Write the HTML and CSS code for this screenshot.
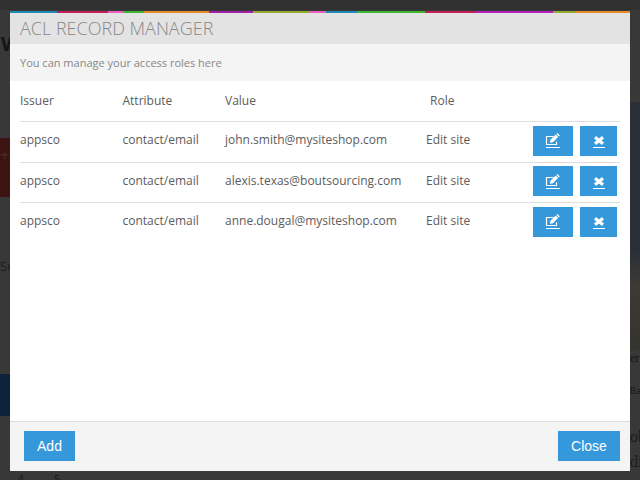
FILE: index.html
```html
<!DOCTYPE html>
<html lang="en">
<head>
<meta charset="utf-8">
<title>ACL Record Manager</title>
<link rel="stylesheet" href="styles.css">
</head>
<body>
<div class="backdrop">
  <span class="bg-w">W</span>
  <span class="bg-red">+</span>
  <span class="bg-su">Su</span>
  <span class="bg-navy"></span>
  <span class="bg-map"></span>
  <span class="bg-er">er</span>
  <span class="bg-ba">Ba</span>
  <span class="bg-ob">ob<br>di</span>
  <span class="bg-foot">4 5</span>
</div>
<div class="modal">
  <div class="stripe"></div>
  <h1 class="title">ACL RECORD MANAGER</h1>
  <p class="sub">You can manage your access roles here</p>
  <div class="content">
    <div class="row head">
      <span>Issuer</span><span>Attribute</span><span>Value</span><span class="role-head">Role</span>
    </div>
    <div class="row">
      <span>appsco</span><span>contact/email</span><span>john.smith@mysiteshop.com</span><span>Edit site</span>
      <div class="actions">
        <button class="icon-btn edit" aria-label="Edit"><svg viewBox="0 0 16 16" width="16" height="16"><path class="s" d="M11.5 8.5V11.5H1.5V3.5H8.5"/><path class="f" d="M4.8 9.8l.7-3 5.2-5.2 2.4 2.4-5.2 5.2zM11.4 1l1-1 2.4 2.4-1 1z"/><path class="s thin" d="M1 14.5H15"/></svg></button>
        <button class="icon-btn del" aria-label="Delete"><svg viewBox="0 0 12 16" width="12" height="16"><path class="x" d="M2 4.2L10 10.8M10 4.2L2 10.8"/><path class="s thin" d="M0 14.5H12"/></svg></button>
      </div>
    </div>
    <div class="row">
      <span>appsco</span><span>contact/email</span><span>alexis.texas@boutsourcing.com</span><span>Edit site</span>
      <div class="actions">
        <button class="icon-btn edit" aria-label="Edit"><svg viewBox="0 0 16 16" width="16" height="16"><path class="s" d="M11.5 8.5V11.5H1.5V3.5H8.5"/><path class="f" d="M4.8 9.8l.7-3 5.2-5.2 2.4 2.4-5.2 5.2zM11.4 1l1-1 2.4 2.4-1 1z"/><path class="s thin" d="M1 14.5H15"/></svg></button>
        <button class="icon-btn del" aria-label="Delete"><svg viewBox="0 0 12 16" width="12" height="16"><path class="x" d="M2 4.2L10 10.8M10 4.2L2 10.8"/><path class="s thin" d="M0 14.5H12"/></svg></button>
      </div>
    </div>
    <div class="row last">
      <span>appsco</span><span>contact/email</span><span>anne.dougal@mysiteshop.com</span><span>Edit site</span>
      <div class="actions">
        <button class="icon-btn edit" aria-label="Edit"><svg viewBox="0 0 16 16" width="16" height="16"><path class="s" d="M11.5 8.5V11.5H1.5V3.5H8.5"/><path class="f" d="M4.8 9.8l.7-3 5.2-5.2 2.4 2.4-5.2 5.2zM11.4 1l1-1 2.4 2.4-1 1z"/><path class="s thin" d="M1 14.5H15"/></svg></button>
        <button class="icon-btn del" aria-label="Delete"><svg viewBox="0 0 12 16" width="12" height="16"><path class="x" d="M2 4.2L10 10.8M10 4.2L2 10.8"/><path class="s thin" d="M0 14.5H12"/></svg></button>
      </div>
    </div>
  </div>
  <div class="footer">
    <button class="btn">Add</button>
    <button class="btn">Close</button>
  </div>
</div>
</body>
</html>
```
FILE: styles.css
```css
* { box-sizing: border-box; }
html, body { margin: 0; height: 100%; overflow: hidden; }
body { background: #333; font-family: "Open Sans", sans-serif; color: #555; }

.backdrop { position: absolute; inset: 0; overflow: hidden; background: linear-gradient(#313131 0 10px, #383838 10px); }
.backdrop span { position: absolute; }
.bg-w { left: 1px; top: 30px; font: bold 20px "Open Sans", sans-serif; color: #151515; }
.bg-red { left: 0; top: 138px; width: 10px; height: 59px; background: #3c1512; font: 16px/34px "Open Sans", sans-serif; color: #4e2a26; }
.bg-su { left: 0; top: 257px; font-size: 13px; color: #1c1c1c; }
.bg-navy { left: 0; top: 374px; width: 10px; height: 42px; background: #0d2138; }
.bg-map { left: 630px; top: 102px; width: 10px; height: 248px; background: linear-gradient(#2b3038 0 60%, #3d3a34 75%, #35332f); }
.bg-er { left: 630px; top: 350px; font: 12px/16px "Liberation Serif", serif; color: #161616; }
.bg-ba { left: 630px; top: 385px; font: 9px/12px "Open Sans", sans-serif; color: #161616; }
.bg-ob { left: 630px; top: 424px; font: 16px/25px "Liberation Serif", serif; color: #1c1c1c; }
.bg-foot { left: 18px; top: 472px; font-size: 10px; word-spacing: 28px; color: #161616; }

.modal {
  position: absolute; left: 10px; top: 11px; width: 620px; height: 460px;
  display: flex; flex-direction: column; background: #fff;
}
.stripe {
  height: 2px; flex: none;
  background: linear-gradient(90deg,
    #1f88b5 0 47px, #c41e5a 47px 98px, #e85cc4 98px 114px, #3db82e 114px 134px,
    #e68a2e 134px 199px, #a01fa8 199px 243px, #93ad33 243px 300px, #e85cc4 300px 316px,
    #1f88b5 316px 347px, #3db82e 347px 415px, #c41e5a 415px 465px, #b41fc0 465px 543px,
    #93ad33 543px 566px, #e68a2e 566px 620px);
}
.title {
  margin: 0; height: 31px; flex: none; padding: 0 10px; background: #e3e3e3;
  font-family: "Open Sans", sans-serif; font-weight: 300; font-size: 18px; line-height: 31px; color: #888;
}
.sub {
  margin: 0; height: 37px; flex: none; padding: 0 10px; background: #f4f4f4;
  font-size: 11px; line-height: 37px; color: #888;
}
.content { flex: 1; padding: 0 10px; }
.row {
  display: grid; grid-template-columns: 102.5px 102.5px 201px 107px auto;
  align-items: center; height: 40.5px; padding-bottom: 4px; border-bottom: 1px solid #ddd;
  font-size: 12px; color: #5c5c5c;
}
.row.head { height: 41px; padding-bottom: 2px; }
.row.last { border-bottom-color: transparent; }
.role-head { padding-left: 4px; }
.actions { display: flex; gap: 7px; align-self: start; margin-top: 3.6px; }
.icon-btn {
  display: flex; align-items: center; justify-content: center;
  height: 30px; padding: 0; border: 0; background: #3498db;
}
.icon-btn.edit { width: 40px; padding-top: 1px; }
.icon-btn.del { width: 37px; padding-top: 1px; }
.s { fill: none; stroke: #fff; stroke-width: 1.2; }
.thin { stroke-width: 1; }
.f { fill: #fff; }
.x { fill: none; stroke: #fff; stroke-width: 3.2; }

.footer {
  flex: none; height: 50px; display: flex; justify-content: space-between; align-items: flex-start;
  padding: 9px 10px 0 14px; background: #f4f4f4; border-top: 1px solid #ddd;
}
.btn {
  height: 30px; padding: 0 12px; border: 0; background: #3498db; color: #fff;
  font-family: "Liberation Sans", sans-serif; font-size: 14px; min-width: 51px;
}
.btn:last-child { min-width: 62px; }
```
